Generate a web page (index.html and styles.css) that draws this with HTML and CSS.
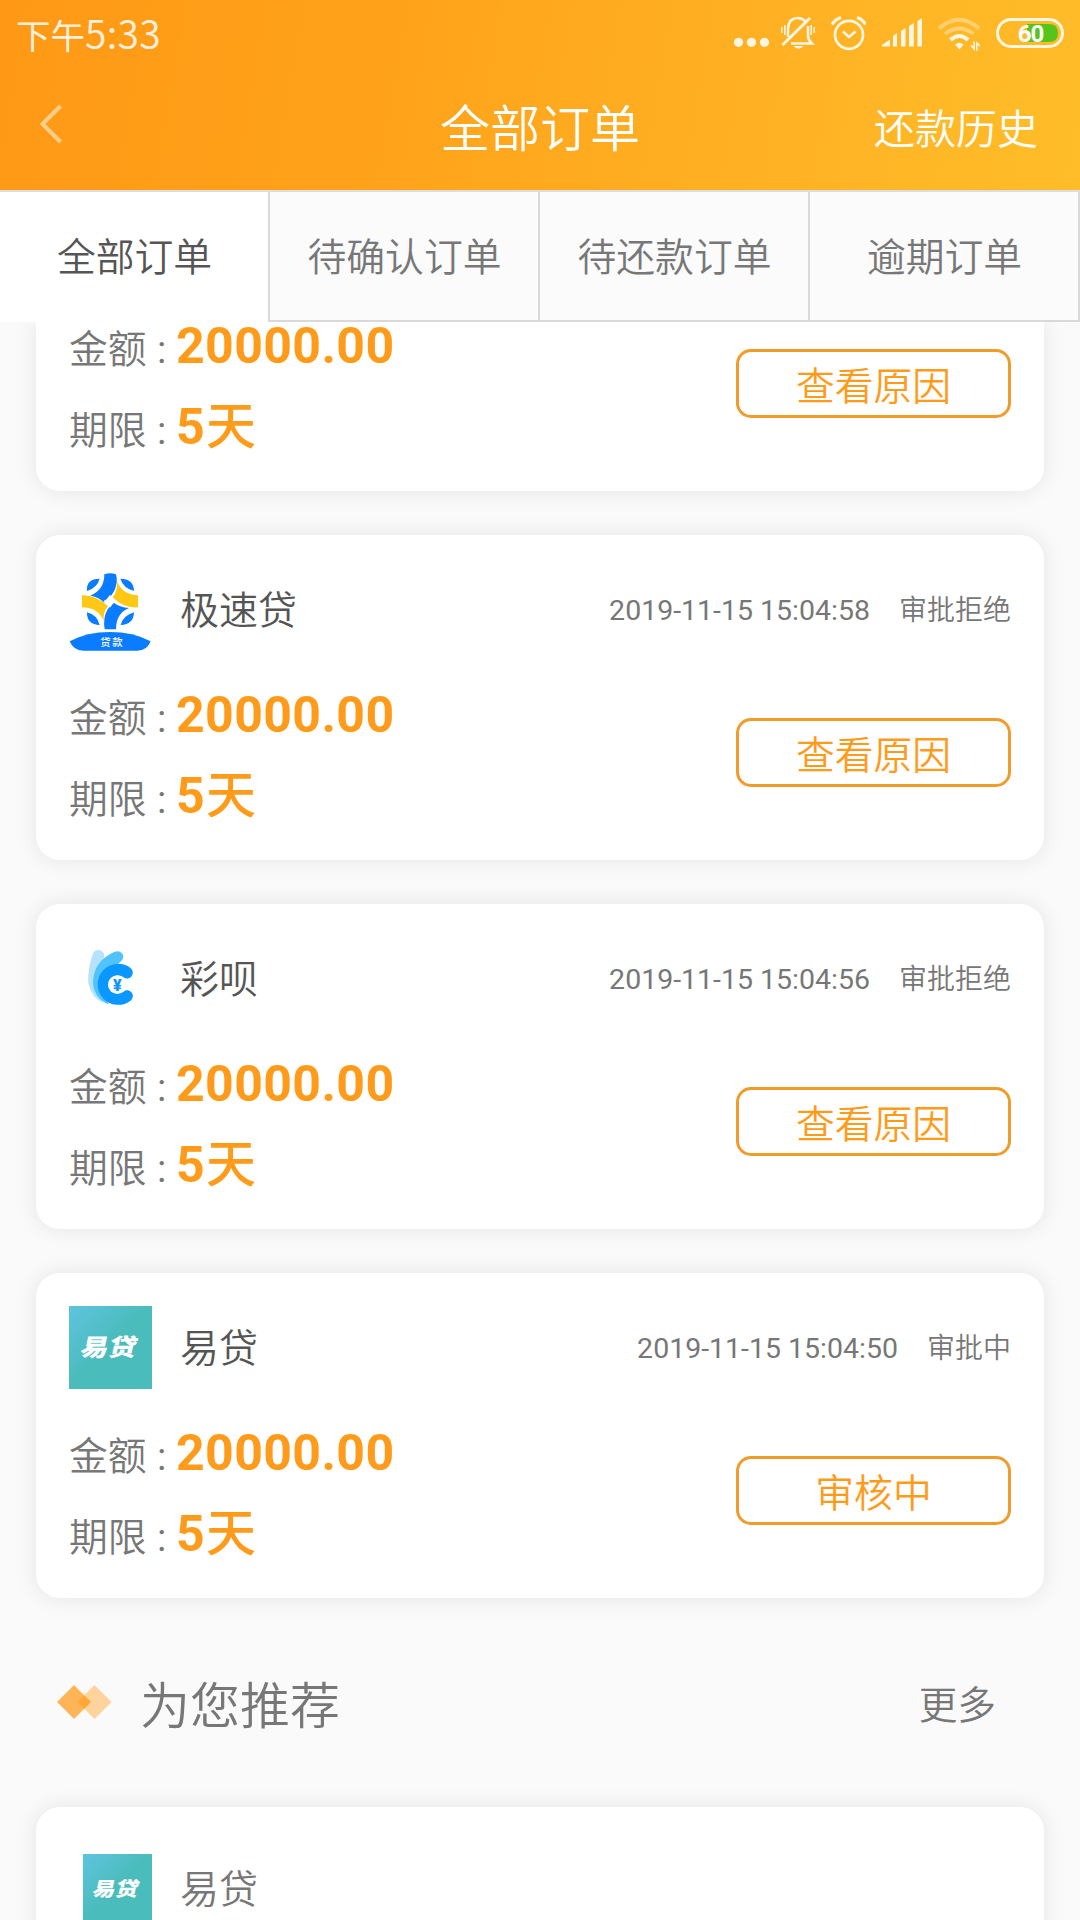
FILE: index.html
```html
<!DOCTYPE html>
<html lang="zh-CN">
<head>
<meta charset="utf-8">
<title>全部订单</title>
<link rel="stylesheet" href="styles.css">
</head>
<body>
<header class="header">
  <div class="status">
    <span class="time">下午<span class="clock">5:33</span></span>
    <div class="status-icons">
      <svg width="35" height="70" viewBox="734 0 35 70" fill="currentColor"><circle cx="738.5" cy="42.3" r="4.6"/><circle cx="751.5" cy="42.3" r="4.6"/><circle cx="764.5" cy="42.3" r="4.6"/></svg>
      <svg width="34" height="70" viewBox="781 0 34 70" fill="none" stroke="currentColor" stroke-width="2.6"><path d="M788 37V28Q789 18 798 18Q802 18 805 21M808 26V36Q808 40 812 43.5H791"/><path d="M782.5 45L810 18" stroke-width="3"/><path d="M793.500 46H803.500Q798.500 51.500 793.500 46Z" fill="currentColor" stroke="none"/><path d="M781.800 27V33M784.800 25V35M811.200 25V35M814.200 27V33" stroke-width="1.500"/></svg>
      <svg width="35" height="70" viewBox="831 0 35 70" fill="none" stroke="currentColor" stroke-width="2.7"><circle cx="849" cy="34.800" r="14"/><path d="M843 31.500L849 37L855.500 31.500"/><path d="M832 24.500Q835 19.500 841 17.500M857 17.500Q863 19.500 865.500 24.500" stroke-width="3.2"/></svg>
      <svg width="40" height="70" viewBox="882 0 40 70" fill="currentColor"><path d="M882 46.500V45L890 39.500V46.500ZM893 46.500V36L897 33V46.500ZM901 46.500V31L905.500 28V46.500ZM909 46.500V26L913.800 23V46.500ZM917.500 46.500V21L922 18V46.500Z"/></svg>
      <svg width="42" height="70" viewBox="938 0 42 70" fill="none" stroke="currentColor" stroke-width="4"><path d="M939 28.500Q959 11 979 28.500M945 34Q959 23 973.500 34" opacity=".4"/><path d="M950.500 40Q959.500 32 968 40"/><path d="M955 44.500Q959.500 41 963.500 44.500L959.500 49.500Z" fill="currentColor" stroke="none"/><path d="M974.200 41.500V49L971 45.500M976.800 50.500V43L980 46" stroke-width="1.600"/></svg>
      <svg width="68" height="70" viewBox="996 0 68 70"><rect x="997.500" y="19.500" width="65" height="27" rx="13.500" fill="none" stroke="currentColor" stroke-width="3"/><path d="M1027 24H1049Q1058 24 1058 33T1049 42H1027Z" fill="#55c51b"/><text class="battery-level" x="1030.500" y="42" text-anchor="middle">60</text></svg>
    </div>
  </div>
  <nav class="navbar">
    <svg class="back" width="24" height="40" viewBox="0 0 24 40"><path d="M21.500 2L3.500 20L21.500 38" fill="none" stroke="currentColor" stroke-width="4"/></svg>
    <h1 class="title">全部订单</h1>
    <span class="history">还款历史</span>
  </nav>
</header>
<div class="tabs">
  <div class="tab tab-active">全部订单</div>
  <div class="tab">待确认订单</div>
  <div class="tab">待还款订单</div>
  <div class="tab">逾期订单</div>
</div>
<main class="list">
  <section class="card card-scrolled">
    <div class="card-body">
      <div class="facts">
        <div class="fact"><span class="label">金额</span><span class="colon">:</span><b>20000.00</b></div>
        <div class="fact"><span class="label">期限</span><span class="colon">:</span><b>5<span class="unit">天</span></b></div>
      </div>
      <div class="action">查看原因</div>
    </div>
  </section>
  <section class="card">
    <div class="card-head">
      <svg class="logo" viewBox="27 24 249 249">
        <g fill="#0a7cff"><path d="M81 93Q78 56 119 56Q112 83 81 93ZM181 56Q221 56 222 93Q190 84 181 56ZM81 157Q112 165 119 195Q80 194 81 157ZM222 157Q221 194 182 195Q190 166 222 157Z"/>
        <path d="M133 43Q150 36 168 43Q174 65 165 88Q154 112 132 128Q118 112 91 107Q133 90 133 43Z"/>
        <path d="M134 208Q128 173 143 148L159 127Q180 143 207 144Q168 160 168 208Z"/></g>
        <path d="M171 64Q187 104 234 106V142Q190 145 158 112Q174 92 171 64ZM66 106Q108 105 144 139Q128 158 131 184Q116 143 66 142Z" fill="#ffc815"/>
        <path d="M150 104Q157 117 171 122Q157 130 150 143Q143 130 130 124Q143 117 150 104Z" fill="#fff"/>
        <path d="M29 244Q80 216 150 216T272 244Q262 272 232 272H70Q40 272 29 244Z" fill="#0a7cff"/>
        <text class="loan-word" x="157" y="258" text-anchor="middle">贷款</text>
      </svg>
      <h2 class="name">极速贷</h2>
      <span class="date">2019-11-15 15:04:58</span><span class="state">审批拒绝</span>
    </div>
    <div class="card-body">
      <div class="facts">
        <div class="fact"><span class="label">金额</span><span class="colon">:</span><b>20000.00</b></div>
        <div class="fact"><span class="label">期限</span><span class="colon">:</span><b>5<span class="unit">天</span></b></div>
      </div>
      <div class="action">查看原因</div>
    </div>
  </section>
  <section class="card">
    <div class="card-head">
      <svg class="logo" viewBox="117 141 249 249">
        <path d="M188 193Q192 180 206 180Q224 182 222 199L215 325L222 340Q185 325 175 280Q172 240 188 193Z" fill="#b4e3fb"/>
        <path d="M254 185Q272 180 279 195Q282 209 270 216L225 260L235 343Q190 322 189 275Q192 212 254 185Z" fill="#50c3fc"/>
        <path d="M291 248A44 44 0 1 0 291 318" fill="none" stroke="#0a97ff" stroke-width="35" stroke-linecap="round"/>
        <circle cx="262" cy="284" r="28" fill="#fff"/>
        <text class="yen" x="262" y="302" text-anchor="middle">¥</text>
      </svg>
      <h2 class="name">彩呗</h2>
      <span class="date">2019-11-15 15:04:56</span><span class="state">审批拒绝</span>
    </div>
    <div class="card-body">
      <div class="facts">
        <div class="fact"><span class="label">金额</span><span class="colon">:</span><b>20000.00</b></div>
        <div class="fact"><span class="label">期限</span><span class="colon">:</span><b>5<span class="unit">天</span></b></div>
      </div>
      <div class="action">查看原因</div>
    </div>
  </section>
  <section class="card">
    <div class="card-head">
      <div class="logo yidai"><span>易贷</span></div>
      <h2 class="name">易贷</h2>
      <span class="date">2019-11-15 15:04:50</span><span class="state">审批中</span>
    </div>
    <div class="card-body">
      <div class="facts">
        <div class="fact"><span class="label">金额</span><span class="colon">:</span><b>20000.00</b></div>
        <div class="fact"><span class="label">期限</span><span class="colon">:</span><b>5<span class="unit">天</span></b></div>
      </div>
      <div class="action">审核中</div>
    </div>
  </section>
  <div class="recommend">
    <svg width="56" height="36" viewBox="0 0 56 36"><path d="M38.500 1L55.500 18L38.500 35L21.500 18Z" fill="#ffd39c"/><path d="M18 1L35 18L18 35L1 18Z" fill="#ffb557"/><path d="M28.200 11.200L35 18L28.200 24.800L21.500 18Z" fill="#ffa836"/></svg>
    <h2 class="recommend-title">为您推荐</h2>
    <span class="more">更多</span>
  </div>
  <section class="card card-offer">
    <div class="card-head">
      <div class="logo yidai yidai-small"><span>易贷</span></div>
      <h2 class="name">易贷</h2>
    </div>
  </section>
</main>
</body>
</html>
```
FILE: styles.css
```css
* { box-sizing: border-box; }

body {
  margin: 0;
  width: 1080px;
  height: 1920px;
  overflow: hidden;
  display: flex;
  flex-direction: column;
  background: #fafafa;
  color: #777;
  font-family: Roboto, "Noto Sans CJK SC", sans-serif;
  font-weight: 350;
}

h1, h2 { margin: 0; font-weight: 350; }
svg { display: block; }

.header {
  height: 190px;
  flex: none;
  background: linear-gradient(100deg, #ff9915 0%, #ffa21a 35%, #ffaf22 65%, #ffbd29 100%);
  color: #fff;
}

.status {
  height: 70px;
  display: flex;
  justify-content: space-between;
  padding: 0 16px;
  color: rgba(255, 255, 255, .87);
}

.time {
  font: 400 34.500px/64px "Noto Sans CJK SC", sans-serif;
}

.clock { font-size: 39px; font-weight: 350; letter-spacing: .3px; }

.status-icons { display: flex; gap: 16px; }
.status-icons svg:first-child { margin-right: -4px; }
.battery-level { font: 700 24px Roboto, sans-serif; fill: #fff; letter-spacing: -1px; }

.navbar {
  height: 120px;
  display: grid;
  grid-template-columns: 1fr auto 1fr;
  align-items: center;
  padding: 0 42px 0 39px;
}

.back { color: rgba(255, 255, 255, .5); margin-bottom: 12px; }
.title { padding: 0 0 0 3px; font-size: 50px; line-height: 120px; }
.history { justify-self: end; font-size: 41px; line-height: 120px; }

.tabs {
  position: relative;
  z-index: 1;
  display: flex;
  height: 132px;
  flex: none;
  border-top: 2px solid #ddd;
}

.tab {
  width: 270px;
  padding: 1px 0 0 1px;
  border-right: 2px solid #d9d9d9;
  border-bottom: 2px solid #d9d9d9;
  background: #fbfbfb;
  text-align: center;
  font-size: 38.800px;
  line-height: 130px;
}

.tab-active { background: #fff; border-bottom: 0; color: #555; }

.list {
  flex: 1;
  min-height: 0;
  display: flex;
  flex-direction: column;
  gap: 44px;
  padding: 0 36px;
}

.card {
  flex: none;
  height: 325px;
  padding: 33px 33px 0;
  border-radius: 24px;
  background: #fff;
  box-shadow: 0 0 22px rgba(0, 0, 0, .09);
}

.card-head { display: flex; align-items: center; height: 83px; }
.logo { width: 83px; height: 83px; flex: none; }
.name { margin-left: 28px; padding-top: 4px; flex: 1; font-size: 39px; line-height: 79px; color: #555; }
.date { padding-top: 2px; font-size: 28.500px; font-weight: 400; }
.state { margin-left: 29px; padding-top: 3px; font-size: 28px; line-height: 40px; }

.loan-word { font: 500 31px "Noto Sans CJK SC", sans-serif; fill: #fff; letter-spacing: 5px; }
.yen { font: 900 48px Roboto, sans-serif; fill: #0a97ff; }

.yidai {
  display: flex;
  align-items: center;
  justify-content: center;
  background: linear-gradient(135deg, #5fc3df 0%, #4abcbb 50%, #4abcbb 100%);
  color: #fff;
}

.yidai span { padding-top: 1px; margin-left: -3px; font-size: 28px; font-weight: 900; line-height: 1; transform: skewX(-12deg) scaleY(.86); }

.yidai-small { width: 69px; height: 69px; }
.yidai-small span { font-size: 23px; }

.card-body { display: flex; justify-content: space-between; margin-top: 41px; }
.facts { display: flex; flex-direction: column; gap: 34px; }
.fact { display: flex; align-items: baseline; height: 47px; line-height: 47px; }
.label { width: 85px; font-size: 38.800px; }
.colon { width: 22px; padding-left: 3px; font-size: 38.700px; font-weight: 400; }
.fact b { font-size: 50px; font-weight: 700; letter-spacing: .4px; color: #ff9b1a; }
.fact .unit { margin-left: 1px; font-weight: 500; }

.action {
  width: 275px;
  height: 69px;
  margin-top: 26px;
  padding-top: 2px;
  border: 3px solid #f09c2b;
  border-radius: 15px;
  color: #ff9b1a;
  font-size: 38.800px;
  line-height: 65px;
  text-align: center;
}

.card-scrolled { height: 169px; padding-top: 0; border-radius: 0 0 24px 24px; }
.card-scrolled .card-body { margin-top: 1px; }

.recommend { display: flex; align-items: center; height: 121px; flex: none; padding: 0 48px 2px 20px; }
.recommend-title { margin-left: 28px; flex: 1; font-size: 50px; }
.more { font-size: 38.700px; }

.card-offer { padding: 40px 47px 0; }
.card-offer .name { color: #777; }
```
